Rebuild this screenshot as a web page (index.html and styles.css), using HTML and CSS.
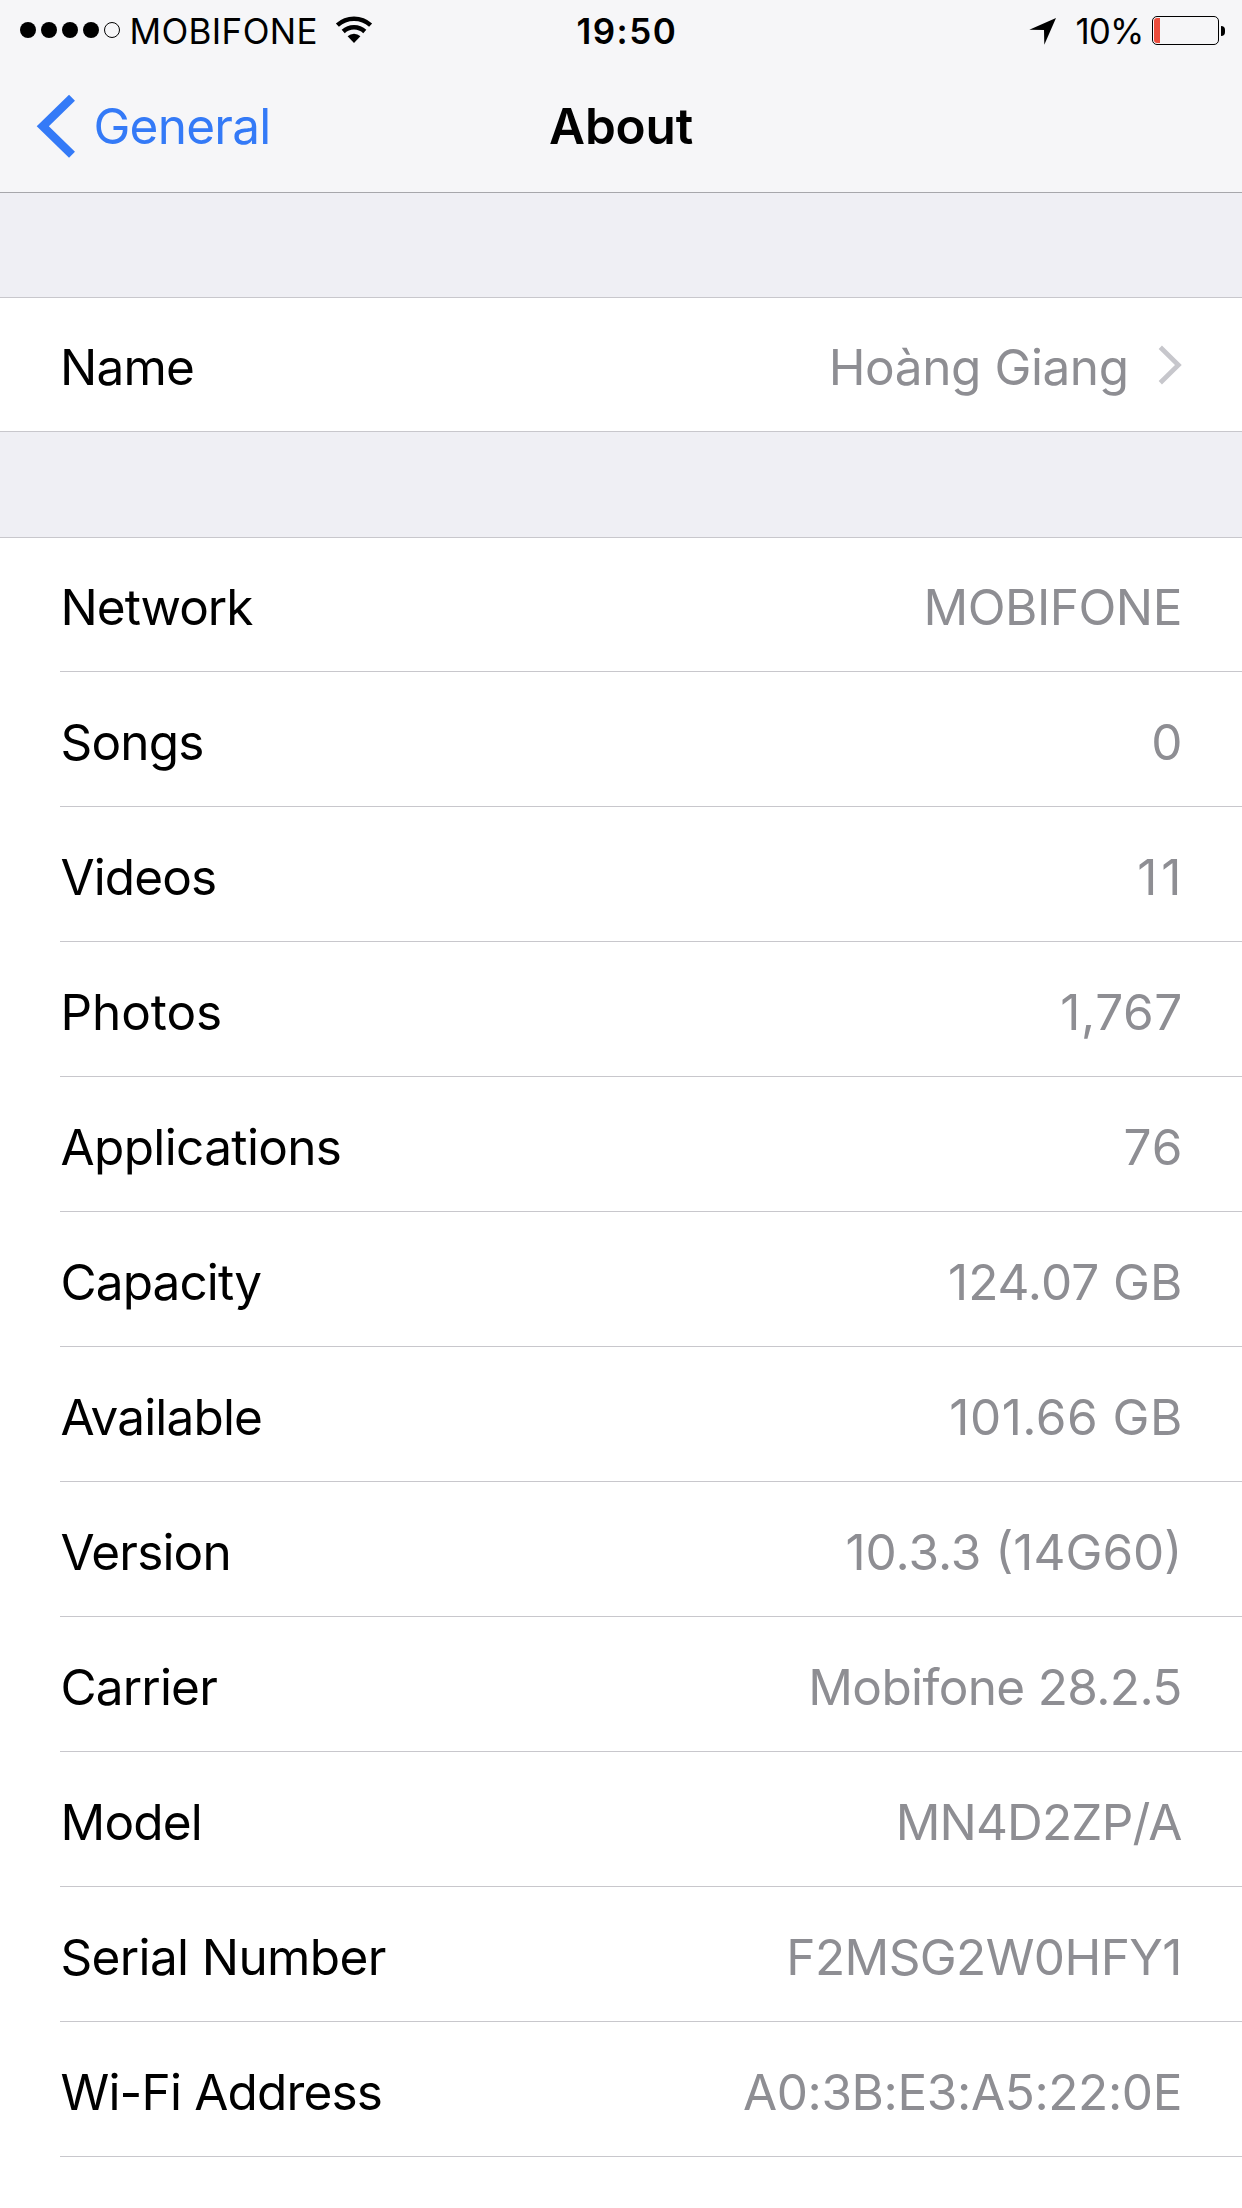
FILE: index.html
```
<!DOCTYPE html>
<html lang="en">
<head>
<meta charset="utf-8">
<title>About</title>
<link rel="stylesheet" href="styles.css">
</head>
<body>
<div class="screen">
  <header class="header">
    <div class="status">
      <div class="status-left">
        <div class="signal"><i class="dot"></i><i class="dot"></i><i class="dot"></i><i class="dot"></i><i class="dot empty"></i></div>
        <span class="operator">MOBIFONE</span>
        <svg class="wifi" width="38" height="28" viewBox="0 0 38 28">
          <path d="M2.4 9.2A24.6 24.6 0 0 1 35.6 9.2M8.2 15.5A15.8 15.8 0 0 1 29.8 15.5" fill="none" stroke="#000" stroke-width="4.5"/>
          <path d="M19 27L12.6 20.3A9.3 9.3 0 0 1 25.4 20.3Z"/>
        </svg>
      </div>
      <span class="clock">19:50</span>
      <div class="status-right">
        <svg class="location" width="28" height="28" viewBox="0 0 28 28"><path d="M27 1L.3 12.8L15 13L15.3 27.7Z"/></svg>
        <span class="percent">10%</span>
        <div class="battery"><div class="battery-case"><div class="battery-level"></div></div><div class="battery-cap"></div></div>
      </div>
    </div>
    <nav class="nav">
      <a class="back">
        <svg class="back-icon" width="40" height="66" viewBox="0 0 40 66"><path d="M36 4.7L6.8 33.2L36 61.7" fill="none" stroke="currentColor" stroke-width="8.5"/></svg>
        <span class="back-text">General</span>
      </a>
      <h1 class="title">About</h1>
    </nav>
  </header>

  <section class="group single">
    <div class="row"><span class="label k83">Name</span><span class="value k43">Hoàng Giang</span>
      <svg class="chevron" width="24" height="42" viewBox="0 0 24 42"><path d="M2.3 3.2L20.4 21L2.3 38.8" fill="none" stroke="#c7c7cc" stroke-width="4.7"/></svg>
    </div>
  </section>

  <section class="group">
    <div class="row"><span class="label k100">Network</span><span class="value k49">MOBIFONE</span></div>
    <div class="row"><span class="label k83">Songs</span><span class="value">0</span></div>
    <div class="row"><span class="label k88">Videos</span><span class="value w400">11</span></div>
    <div class="row"><span class="label k10">Photos</span><span class="value w65">1,767</span></div>
    <div class="row"><span class="label k64">Applications</span><span class="value w100">76</span></div>
    <div class="row"><span class="label k88">Capacity</span><span class="value">124.07 GB</span></div>
    <div class="row"><span class="label k83">Available</span><span class="value w49">101.66 GB</span></div>
    <div class="row"><span class="label k83">Version</span><span class="value">10.3.3 (14G60)</span></div>
    <div class="row"><span class="label k83">Carrier</span><span class="value k64">Mobifone 28.2.5</span></div>
    <div class="row"><span class="label k83">Model</span><span class="value k83">MN4D2ZP/A</span></div>
    <div class="row"><span class="label k64">Serial Number</span><span class="value k61">F2MSG2W0HFY1</span></div>
    <div class="row"><span class="label k83">Wi-Fi Address</span><span class="value k38">A0:3B:E3:A5:22:0E</span></div>
    <div class="row"><span class="label k83">Bluetooth</span></div>
  </section>
</div>
</body>
</html>
```
FILE: styles.css
```
* { box-sizing: border-box; }

body {
  margin: 0;
  background: #efeff4;
  color: #000;
  font-family: Inter, "Liberation Sans", sans-serif;
}

.screen {
  width: 1242px;
  height: 2208px;
  overflow: hidden;
}

svg { display: block; flex: none; }

/* Header */
.header {
  height: 193px;
  background: #f6f6f8;
  border-bottom: 1px solid #a7a7ab;
}

.status {
  display: grid;
  grid-template-columns: 576.4px 1fr auto;
  height: 60px;
  padding: 10px 17px 0 0;
  font-size: 35px;
  line-height: 42px;
}

.status-left {
  display: flex;
  align-items: flex-start;
  padding-left: 20px;
}

.signal {
  display: flex;
  gap: 5px;
  margin: 12px 9.5px 0 0;
}

.dot {
  width: 16px;
  height: 16px;
  border-radius: 50%;
  background: #000;
}

.dot.empty {
  background: none;
  border: 1px solid #000;
}

.operator { letter-spacing: .36px; width: 205.5px; }
.wifi { margin-top: 6px; }
.clock { font-weight: 600; letter-spacing: 1.5px; }

.status-right { display: flex; align-items: flex-start; }
.location { margin: 7px 18.5px 0 0; }
.percent { width: 76.5px; letter-spacing: -.9px; }

.battery {
  display: flex;
  align-items: center;
  gap: 2px;
  margin-top: 6px;
}

.battery-case {
  width: 67px;
  height: 29px;
  padding: 1px;
  border: 1px solid #000;
  border-radius: 5px;
}

.battery-level {
  width: 6px;
  height: 25px;
  border-radius: 3px 0 0 3px;
  background: #eb4d3d;
}

.battery-cap {
  width: 4px;
  height: 10px;
  border-radius: 0 4px 4px 0;
  background: #000;
}

.nav {
  display: grid;
  grid-template-columns: 1fr auto 1fr;
  height: 132px;
  font-size: 49.5px;
  line-height: 60px;
}

.back {
  display: flex;
  align-items: flex-start;
  padding: 33px 0 0 36px;
  color: #347af7;
}

.back-text { margin: 3px 0 0 17.4px; letter-spacing: -.75px; }

.title {
  margin: 36px 0 0;
  font-size: inherit;
  font-weight: 600;
  letter-spacing: -.2px;
}

/* Grouped list */
.group {
  margin-top: 105px;
  background: #fff;
  border-top: 1px solid #c8c7cc;
}

.single { margin-top: 104px; border-bottom: 1px solid #c8c7cc; }

.row {
  display: flex;
  align-items: flex-end;
  justify-content: space-between;
  height: 135px;
  margin-left: 60px;
  padding: 0 59.6px 34px .5px;
  border-bottom: 1px solid #c8c7cc;
  font-size: 49.5px;
  line-height: 60px;
  white-space: nowrap;
}

.row:first-child { height: 134px; }
.row:last-child { font-size: 50px; }
.single .row:first-child { height: 133px; padding: 0 60px 34px 0; border-bottom: 0; font-size: 49.5px; }

.label, .value { letter-spacing: var(--track, 0px); }

/* The negative margin takes back the tracking after the last letter. */
.value {
  margin-left: auto;
  margin-right: calc(-1 * var(--track, 0px));
  color: #8e8e93;
}

.value.w400 { margin-right: -3px; }

.chevron { margin: 0 0 11px 29px; }

/* Tracking steps, in hundredths of a pixel: k tightens, w widens */
.k10 { --track: -.1px; }
.k38 { --track: -.38px; }
.k43 { --track: -.43px; }
.k49 { --track: -.49px; }
.k61 { --track: -.61px; }
.k64 { --track: -.64px; }
.k83 { --track: -.83px; }
.k88 { --track: -.89px; }
.k100 { --track: -1px; }
.w49 { --track: .49px; }
.w65 { --track: .65px; }
.w100 { --track: 1px; }
.w400 { --track: 4px; }
```
